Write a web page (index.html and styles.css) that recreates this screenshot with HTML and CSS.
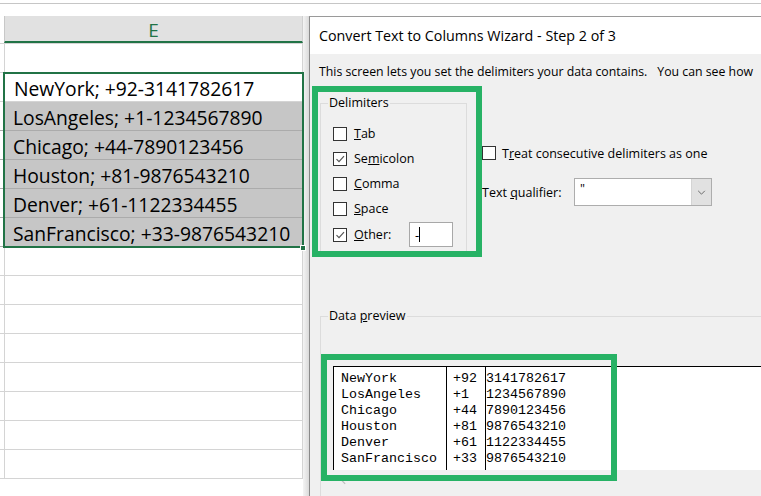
FILE: index.html
```html
<!DOCTYPE html>
<html>
<head>
<meta charset="utf-8">
<link rel="stylesheet" href="styles.css">
</head>
<body>
<div class="topbar"></div>
<div class="main">
  <div class="sheet">
    <div class="colhead"><span class="rh"></span><div class="colhead-cell">E</div></div>
    <div class="row"><span class="rh"></span><div class="cell"></div></div>
    <div class="selection">
      <div class="row active"><span class="rh"></span><div class="cell first">NewYork; +92-3141782617</div></div>
      <div class="row sel"><span class="rh"></span><div class="cell">LosAngeles; +1-1234567890</div></div>
      <div class="row sel"><span class="rh"></span><div class="cell">Chicago; +44-7890123456</div></div>
      <div class="row sel"><span class="rh"></span><div class="cell">Houston; +81-9876543210</div></div>
      <div class="row sel"><span class="rh"></span><div class="cell">Denver; +61-1122334455</div></div>
      <div class="row sel"><span class="rh"></span><div class="cell">SanFrancisco; +33-9876543210</div></div>
      <span class="fill-handle"></span>
    </div>
    <div class="row"><span class="rh"></span><div class="cell"></div></div>
    <div class="row"><span class="rh"></span><div class="cell"></div></div>
    <div class="row"><span class="rh"></span><div class="cell"></div></div>
    <div class="row"><span class="rh"></span><div class="cell"></div></div>
    <div class="row"><span class="rh"></span><div class="cell"></div></div>
    <div class="row"><span class="rh"></span><div class="cell"></div></div>
    <div class="row"><span class="rh"></span><div class="cell"></div></div>
    <div class="row"><span class="rh"></span><div class="cell"></div></div>
  </div>
  <div class="shadow"></div>
  <div class="dialog">
    <div class="titlebar">Convert Text to Columns Wizard - Step 2 of 3</div>
    <div class="dbody">
      <p class="desc">This screen lets you set the delimiters your data contains.<span class="gap"></span>You can see how</p>
      <div class="opts">
        <div class="group delims">
          <div class="glabel">Delimiters</div>
          <div class="cb"><span class="box"></span><span class="lbl"><u>T</u>ab</span></div>
          <div class="cb"><span class="box checked"><svg viewBox="0 0 12 12"><path d="M2.5 6.2 L5 8.7 L10 3.2"/></svg></span><span class="lbl">Se<u>m</u>icolon</span></div>
          <div class="cb"><span class="box"></span><span class="lbl"><u>C</u>omma</span></div>
          <div class="cb"><span class="box"></span><span class="lbl"><u>S</u>pace</span></div>
          <div class="cb other"><span class="box checked"><svg viewBox="0 0 12 12"><path d="M2.5 6.2 L5 8.7 L10 3.2"/></svg></span><span class="lbl lbl-other"><u>O</u>ther:</span><span class="otherinput">-<i class="caret"></i></span></div>
        </div>
        <div class="rightopts">
          <div class="cb treat"><span class="box"></span><span class="lbl">T<u>r</u>eat consecutive delimiters as one</span></div>
          <div class="qual">
            <span class="qlabel">Text <u>q</u>ualifier:</span>
            <div class="select"><span class="qval">"</span><span class="drop"><svg viewBox="0 0 10 6"><path d="M1 1 L5 5 L9 1"/></svg></span></div>
          </div>
        </div>
      </div>
      <div class="group preview">
        <div class="glabel">Data <u>p</u>review</div>
        <div class="pvbox">
          <div class="pcol c1">
            <div>NewYork</div><div>LosAngeles</div><div>Chicago</div><div>Houston</div><div>Denver</div><div>SanFrancisco</div>
          </div>
          <div class="pcol c2">
            <div>+92</div><div>+1</div><div>+44</div><div>+81</div><div>+61</div><div>+33</div>
          </div>
          <div class="pcol c3">
            <div>3141782617</div><div>1234567890</div><div>7890123456</div><div>9876543210</div><div>1122334455</div><div>9876543210</div>
          </div>
        </div>
        <div class="scroll"><svg viewBox="0 0 6 10"><path d="M5 1 L1 5 L5 9"/></svg></div>
      </div>
    </div>
    <div class="hl hl-delims"></div>
    <div class="hl hl-preview"></div>
  </div>
</div>
</body>
</html>
```

FILE: styles.css
```css
* { box-sizing: border-box; }
html, body { margin: 0; padding: 0; }
body {
  width: 761px;
  height: 496px;
  overflow: hidden;
  background: #ffffff;
  font-family: "Open Sans", "Noto Sans", sans-serif;
  color: #000;
}
.topbar {
  height: 4px;
  border-bottom: 1px solid #c6c6c6;
  margin-bottom: 12px;
}
.main {
  display: flex;
  height: 480px;
}
/* ---------- sheet ---------- */
.sheet {
  width: 303px;
  flex: none;
}
.colhead {
  display: flex;
  height: 28px;
  border-bottom: 1px solid #d4d4d4;
}
.rh {
  width: 4px;
  flex: none;
}
.colhead-cell {
  flex: 1;
  background: #e1e1e1;
  border-left: 1px solid #c8c8c8;
  border-right: 1px solid #d0d0d0;
  border-bottom: 2px solid #217346;
  color: #217346;
  font-family: "Open Sans", sans-serif;
  font-size: 19px;
  text-align: center;
  line-height: 29px;
}
.row {
  display: flex;
  height: 29px;
  border-bottom: 1px solid #d4d4d4;
}
.cell {
  flex: 1;
  border-left: 1px solid #d4d4d4;
  border-right: 1px solid #d4d4d4;
  font-size: 19.3px;
  line-height: 31px;
  padding-left: 8px;
  white-space: nowrap;
  color: #000;
}
.cell.first { padding-left: 9px; }
.selection {
  position: relative;
}
.row.sel { background: #c6c6c6; border-bottom-color: #ababab; }
.row.sel .rh { background: #fff; }
.selection::after {
  content: "";
  position: absolute;
  left: 3px;
  right: -1px;
  top: -1px;
  bottom: -1px;
  border: 2px solid #217346;
  pointer-events: none;
}
.fill-handle {
  position: absolute;
  right: -3px;
  bottom: -4px;
  width: 6px;
  height: 6px;
  background: #217346;
  border: 1px solid #fff;
  z-index: 2;
}
.shadow {
  width: 6px;
  flex: none;
  background: linear-gradient(to right, #f4f4f4, #dadada);
}
/* ---------- dialog ---------- */
.dialog {
  position: relative;
  flex: 1;
  border-left: 1px solid #8a8a8a;
  border-top: 1px solid #9a9a9a;
  background: #f0f0f0;
  overflow: hidden;
  font-family: "Open Sans", "Noto Sans", sans-serif;
  font-size: 12.5px;
  color: #000;
}
.titlebar {
  height: 37px;
  background: #fff;
  padding-left: 9px;
  font-size: 14.3px;
  line-height: 37px;
  white-space: nowrap;
}
.dbody {
  padding-left: 9px;
}
.desc {
  margin: 10px 0 0 0;
  font-size: 12.3px;
  line-height: 16px;
  white-space: nowrap;
}
.gap {
  display: inline-block;
  width: 10px;
}
.opts {
  display: flex;
  align-items: flex-start;
  margin-top: 23px;
}
.group {
  border: 1px solid #dcdcdc;
}
.glabel {
  display: inline-block;
  margin: -9px 0 0 -5px;
  padding: 0 1px;
  line-height: 16px;
  background: #f0f0f0;
  vertical-align: top;
}
.delims {
  width: 147px;
  height: 151px;
  margin-left: 1px;
  padding-left: 12px;
}
.cb {
  display: flex;
  align-items: center;
  height: 25px;
}
.delims .cb:first-of-type { margin-top: 7px; }
.box {
  width: 14px;
  height: 14px;
  flex: none;
  border: 1px solid #333;
  background: #fff;
  display: flex;
  align-items: center;
  justify-content: center;
}
.box svg { width: 12px; height: 12px; }
.box path {
  fill: none;
  stroke: #555;
  stroke-width: 1.2;
}
.lbl {
  margin-left: 7px;
  white-space: nowrap;
}
.lbl-other {
  display: inline-block;
  width: 55px;
}
.otherinput {
  width: 44px;
  height: 25px;
  border: 1px solid #a8a8a8;
  background: #fff;
  display: flex;
  align-items: center;
  padding-left: 5px;
  font-size: 13px;
}
.caret {
  display: inline-block;
  width: 1px;
  height: 15px;
  background: #000;
}
.cb.other { margin-top: 1px; }
.rightopts {
  margin-left: 15px;
  padding-top: 40px;
}
.treat { height: 20px; }
.treat .lbl { margin-left: 6px; }
.qual {
  display: flex;
  align-items: center;
  margin-top: 15px;
}
.qlabel {
  width: 92px;
  white-space: nowrap;
}
.select {
  width: 138px;
  height: 28px;
  border: 1px solid #adadad;
  background: #fff;
  display: flex;
}
.qval {
  flex: 1;
  padding-left: 5px;
  line-height: 20px;
}
.drop {
  width: 20px;
  background: #e1e1e1;
  border-left: 1px solid #d4d4d4;
  display: flex;
  align-items: center;
  justify-content: center;
}
.drop svg { width: 9px; height: 5px; }
.drop path { fill: none; stroke: #606060; stroke-width: 1.1; }
.preview {
  margin-left: 1px;
  margin-top: 62px;
  height: 200px;
  border-right: none;
  padding-left: 12px;
}
.pvbox {
  margin-top: 32px;
  height: 104px;
  background: #fff;
  border-top: 1px solid #000;
  border-left: 1px solid #000;
  display: flex;
  font-family: "Liberation Mono", "Courier New", monospace;
  font-size: 13.33px;
  line-height: 16px;
}
.pcol {
  padding-top: 4px;
  white-space: nowrap;
}
.c1 { width: 113px; padding-left: 7px; border-right: 1px solid #000; }
.c2 { width: 39px; padding-left: 6px; border-right: 1px solid #000; }
.c3 { flex: 1; }
.scroll {
  height: 20px;
  padding: 6px 0 0 8px;
}
.scroll svg { width: 5px; height: 9px; display: block; }
.scroll path { fill: none; stroke: #bdbdbd; stroke-width: 1.5; }
.hl {
  position: absolute;
  border: 6px solid #27b265;
  pointer-events: none;
}
.hl-delims {
  left: 2px;
  top: 69px;
  width: 170px;
  height: 171px;
}
.hl-preview {
  left: 11px;
  top: 337px;
  width: 296px;
  height: 127px;
}
```
